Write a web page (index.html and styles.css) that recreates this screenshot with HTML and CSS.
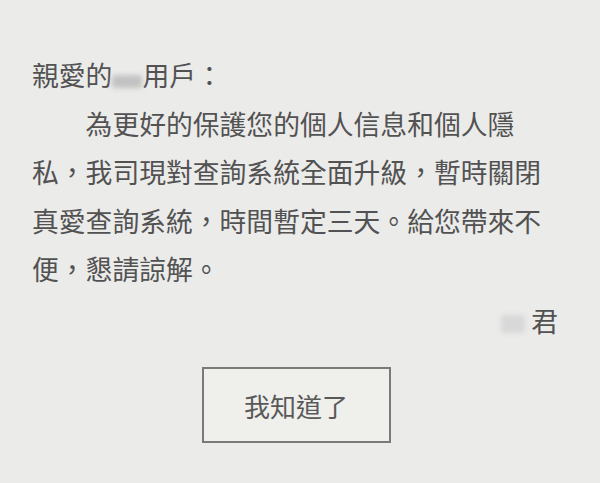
FILE: index.html
```html
<!DOCTYPE html>
<html lang="zh-Hant">
<head>
<meta charset="utf-8">
<link rel="stylesheet" href="styles.css">
</head>
<body>
<div class="page">
  <p class="greet">親愛的<span class="blur blur-name"></span>用戶：</p>
  <p class="body">為更好的保護您的個人信息和個人隱私，我司現對查詢系統全面升級，暫時關閉真愛查詢系統，時間暫定三天。給您帶來不便，懇請諒解。</p>
  <p class="sign"><span class="blur blur-sign"></span>君</p>
  <div class="actions">
    <button class="btn">我知道了</button>
  </div>
</div>
</body>
</html>
```
FILE: styles.css
```css
html, body {
  margin: 0;
  padding: 0;
  background: #ebebea;
}
.page {
  width: 600px;
  height: 483px;
  box-sizing: border-box;
  padding: 51px 38px 0 32px;
  font-family: "Noto Sans CJK TC", "Noto Sans CJK SC", sans-serif;
  font-size: 26.8px;
  color: #525252;
  line-height: 48.5px;
}
.page p {
  margin: 0;
}
.greet {
  white-space: nowrap;
}
.body {
  text-indent: 2em;
  width: 19.1em;
}
.blur {
  display: inline-block;
  vertical-align: middle;
  background: #c2c2c2;
  filter: blur(2.5px);
  border-radius: 3px;
}
.blur-name {
  width: 30px;
  height: 13px;
  margin-top: 6px;
}
.blur-sign {
  width: 24px;
  height: 18px;
  margin-right: 6px;
  background: #d8d8d8;
}
.sign {
  text-align: right;
  margin-top: 3px !important;
  padding-right: 4px;
}
.actions {
  display: flex;
  justify-content: center;
  margin-top: 22px;
}
.btn {
  width: 189px;
  height: 76px;
  box-sizing: border-box;
  border: 2px solid #7a7a7a;
  background: #efefeb;
  font-family: "Noto Sans CJK TC", "Noto Sans CJK SC", sans-serif;
  font-size: 26px;
  color: #595959;
  padding: 0;
  margin-left: -2px;
}
```
